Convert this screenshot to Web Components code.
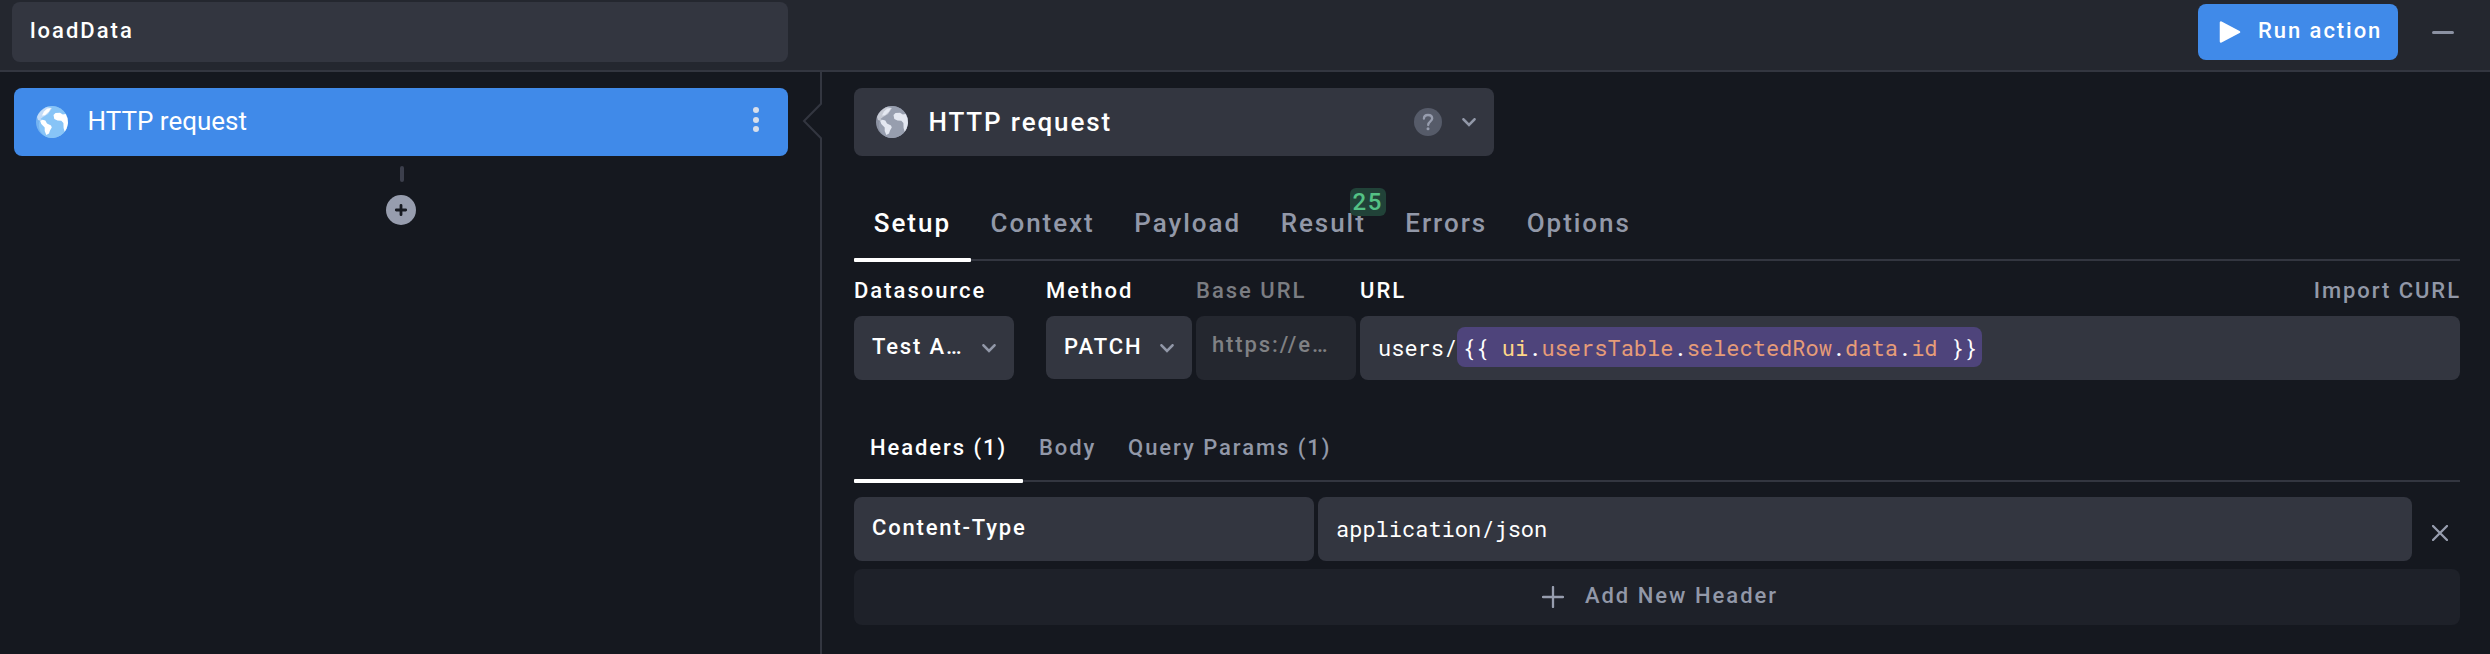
<!DOCTYPE html>
<html lang="en">
<head>
<meta charset="utf-8">
<title>Action editor</title>
<style>
body{margin:0;background:#15181f;overflow:hidden;font-family:Roboto,"Liberation Sans",sans-serif;color:#fff;-webkit-font-smoothing:antialiased}
</style>
</head>
<body>
<action-editor></action-editor>
<script>
function define(name, html) {
  const t = document.createElement('template');
  t.innerHTML = html;
  customElements.define(name, class extends HTMLElement {
    constructor() {
      super();
      this.attachShadow({ mode: 'open' }).appendChild(t.content.cloneNode(true));
    }
  });
}

define('globe-icon', `<style>
:host{display:block;width:32px;height:32px;flex:none}
svg{display:block}
.sea{fill:var(--sea,#979eae)}.edge{fill:var(--edge,#8b91a1)}.haze{fill:var(--haze,#c6cad4)}.land{fill:var(--land,#e4e8f1)}
</style>
<svg width="32" height="32" viewBox="0 0 32 32">
<circle class="edge" cx="16" cy="16" r="16"/>
<path class="sea" d="M9 1.6A16 16 0 0 1 32 16A16 16 0 0 1 10 30.8Q2 26 3 17Z"/>
<path class="haze" d="M1 11Q3.5 4 11 .9L16 2L12 8L7 11L4.5 13L6.5 14.2L5 15L2 14Z"/>
<path class="land" d="M6 9.5L8 5.5L11 2.8L15 2L13 5.5L9 9.3Z"/>
<path class="land" d="M4.2 15L6.5 13.8L9.3 14.6L11 17.5L15 19.6L15.8 21.5L14 24.5L13 27.6L10.3 29L8.7 25V21.5L5.3 18Z"/>
<path class="land" d="M17.5 9L19.5 7L24 6.8L26.8 8.5L29.6 8L31.4 12L32 17L30.6 22.5L28.7 25.8L27.6 22L27.4 17L25.3 14.8L21.5 14.6L18.3 13Z"/>
</svg>`);

define('chevron-icon', `<style>:host{display:block;width:14px;height:9px;flex:none}svg{display:block}</style>
<svg width="14" height="9" viewBox="0 0 14 9"><path d="M1.5 1.3L7 7L12.5 1.3" fill="none" stroke="#9298a8" stroke-width="2.6" stroke-linecap="round" stroke-linejoin="miter"/></svg>`);

define('text-field', `<style>
:host{display:flex;align-items:center;justify-content:space-between;box-sizing:border-box;height:64px;padding:0 18px;border-radius:8px;background:#333640;font-size:22px;font-weight:500;letter-spacing:2px;white-space:nowrap}
:host([muted]){background:#24272f;color:#808184}
:host([mono]){font-family:"Roboto Mono","Liberation Mono",monospace;font-weight:400;letter-spacing:0;justify-content:flex-start}
</style><slot></slot>`);

define('form-label', `<style>
:host{display:block;box-sizing:border-box;height:55px;padding-top:4px;line-height:51px;font-size:22px;font-weight:500;letter-spacing:2px;white-space:nowrap}
:host([muted]){color:#7b7d82}
</style><slot></slot>`);

define('tab-item', `<style>
:host{display:block;position:relative;box-sizing:border-box;padding:0 var(--tab-pad);color:#9298a8;white-space:nowrap}
:host([active]){color:#fff}
:host([active])::after{content:"";position:absolute;left:0;right:0;bottom:-1px;height:4px;border-radius:1px;background:#fff}
</style><slot></slot>`);

define('tab-bar', `<style>
:host{display:flex;box-sizing:border-box;border-bottom:2px solid #333640;font-weight:500;letter-spacing:1.95px;--tab-pad:19.8px;height:105px;font-size:26px;line-height:36px;padding-top:49px;align-items:stretch}
:host([small]){--tab-pad:15.9px;font-size:22px;height:102px;padding-top:50px;line-height:36px}
::slotted(*){margin-bottom:-2px}
</style><slot></slot>`);

define('count-badge', `<style>
:host{position:absolute;right:0;top:-17px;width:36px;height:28px;box-sizing:border-box;padding-left:3px;border-radius:6px;background:#214238;color:#54c285;font-size:24px;line-height:29px;letter-spacing:1.5px;font-weight:500}
</style><slot></slot>`);

define('title-bar', `<style>
:host{display:flex;box-sizing:border-box;height:72px;border-bottom:2px solid #333640;background:#24272f;align-items:flex-start;padding-left:12px;padding-right:36px}
text-field{width:776px;height:60px;margin-top:2px;padding-bottom:3px}
.run{display:flex;box-sizing:border-box;width:200px;height:56px;margin:4px 34px 0 auto;padding:0 0 0 21px;border-radius:8px;background:#408ae9;font-size:22px;font-weight:500;letter-spacing:1.95px;line-height:53px;white-space:nowrap}
.run svg{margin:16px 17px 0 0}
.min{width:22px;height:3px;margin-top:30.5px;border-radius:2px;background:#8b91a2}
</style>
<text-field>loadData</text-field>
<div class="run"><svg width="22" height="24" viewBox="0 0 22 24"><path d="M2 2.5V21.5L20 12Z" fill="#fff" stroke="#fff" stroke-width="2.5" stroke-linejoin="round"/></svg>Run action</div>
<div class="min"></div>`);

define('step-list', `<style>
:host{display:flex;flex-direction:column;align-items:center;box-sizing:border-box;width:802px;padding:16px 14px 0}
.step{display:flex;align-self:stretch;box-sizing:border-box;height:68px;align-items:center;border-radius:8px;background:#408ae9;padding:0 29px 0 22px;font-size:26px;line-height:66px}
.step span{margin-left:19.6px;flex:1;height:68px}
globe-icon{--sea:#87c4f7;--edge:#74b3f1;--haze:#c3dcf8;--land:#fff}
.dots{display:grid;gap:3.5px;margin-bottom:5px}
.dots i{width:6px;height:6px;border-radius:3px;background:#d8dfeb}
.link{width:4px;height:16px;border-radius:2px;background:#3c3f4c;margin:10px 0 13px 2px}
</style>
<div class="step"><globe-icon></globe-icon><span>HTTP request</span><div class="dots"><i></i><i></i><i></i></div></div>
<div class="link"></div>
<svg width="30" height="30" viewBox="0 0 30 30"><circle cx="15" cy="15" r="15" fill="#979dae"/><path d="M10.3 15H19.7M15 10.3V19.7" stroke="#171a21" stroke-width="2.8" stroke-linecap="round"/></svg>`);

define('panel-divider', `<style>
:host{display:flex;flex-direction:column;width:20px}
i{flex:1;width:2px;margin-left:18px;background:#333640}svg{display:block}
</style>
<svg width="20" height="67" viewBox="802 72 20 67"><path d="M821 72V103.8L804 121L821 138.2V139" fill="none" stroke="#333640" stroke-width="2"/></svg><i></i>`);

define('request-panel', `<style>
:host{display:block;flex:1;padding:16px 30px 0 32px}
.kind{display:flex;box-sizing:border-box;width:640px;height:68px;align-items:center;padding:0 18.5px 0 22px;border-radius:8px;background:#333640;font-size:26px;font-weight:500;letter-spacing:1.87px;line-height:68px}
.kind b{font-weight:500;margin-left:20.5px;flex:1}
.kind svg{margin-right:19.5px}
.fields{display:flex}
.ds{width:160px;margin-right:32px}
.me{width:146px;margin-right:4px}
.ba{width:160px;margin-right:4px}
.ur{flex:1}
.lab{display:flex;justify-content:space-between}
.import{color:#9298a8;letter-spacing:1.95px;margin-right:-1px}
.ds text-field,.me text-field{padding-bottom:3px}
.ds text-field{letter-spacing:1.85px}
.me text-field{height:63px}
chevron-icon{margin-top:4px}
.kind chevron-icon{margin-top:1px}
.ba text-field{padding:0 0 7px 16px;letter-spacing:1.9px}
.users{margin-top:-1px}
.pill{box-sizing:border-box;height:40px;padding:0 5px;border-radius:8px;background:#4e447b;line-height:41px;margin-top:-2px;white-space:pre}
.y{color:#ffd788}.o{color:#e69c78}
.row{display:flex;margin-top:15px;align-items:center}
.row text-field{flex:none}
.key{width:460px;margin-right:4px;padding-bottom:3px;letter-spacing:1.82px}
.val{width:1094px;margin-right:20px;padding-bottom:1px}
.add{display:flex;height:56px;margin-top:8px;border-radius:8px;background:#1e2129;color:#9298a8;justify-content:center;font-size:22px;font-weight:500;letter-spacing:2px;line-height:53px}
.add svg{margin:17px 21px 0 6px}
</style>
<div class="kind"><globe-icon></globe-icon><b>HTTP request</b>
<svg width="28" height="28" viewBox="0 0 28 28"><circle cx="14" cy="14" r="14" fill="#565b69"/><path d="M9.9 10.7C9.9 8.2 11.6 7 14 7C16.4 7 18.2 8.4 18.2 10.6C18.2 13.4 14.2 13.4 14.2 17" fill="none" stroke="#979dae" stroke-width="2.3" stroke-linecap="round"/><circle cx="14" cy="20.8" r="1.5" fill="#979dae"/></svg>
<chevron-icon></chevron-icon></div>
<tab-bar><tab-item active>Setup</tab-item><tab-item>Context</tab-item><tab-item>Payload</tab-item><tab-item>Result<count-badge>25</count-badge></tab-item><tab-item>Errors</tab-item><tab-item>Options</tab-item></tab-bar>
<div class="fields">
<div class="ds"><form-label>Datasource</form-label><text-field>Test A…<chevron-icon></chevron-icon></text-field></div>
<div class="me"><form-label>Method</form-label><text-field>PATCH<chevron-icon></chevron-icon></text-field></div>
<div class="ba"><form-label muted>Base URL</form-label><text-field muted>https://e…</text-field></div>
<div class="ur"><div class="lab"><form-label>URL</form-label><form-label class="import">Import CURL</form-label></div><text-field mono><span class="users">users/</span><div class="pill">{{ <span class="y">ui</span>.<span class="o">usersTable</span>.<span class="o">selectedRow</span>.<span class="o">data</span>.<span class="o">id</span> }}</div></text-field></div>
</div>
<tab-bar small><tab-item active>Headers (1)</tab-item><tab-item>Body</tab-item><tab-item>Query Params (1)</tab-item></tab-bar>
<div class="row"><text-field class="key">Content-Type</text-field><text-field class="val" mono><span>application/json</span></text-field>
<svg width="16" height="16" viewBox="0 0 16 16" style="margin-top:8px"><path d="M1 1L15 15M15 1L1 15" stroke="#979dae" stroke-width="2.3" stroke-linecap="round"/></svg></div>
<div class="add"><svg width="22" height="22" viewBox="0 0 22 22"><path d="M1 11H21M11 1V21" stroke="#979dae" stroke-width="2.3" stroke-linecap="round"/></svg>Add New Header</div>`);

define('action-editor', `<style>
:host{display:flex;flex-direction:column;height:654px}
main{display:flex;flex:1}
</style>
<title-bar></title-bar>
<main><step-list></step-list><panel-divider></panel-divider><request-panel></request-panel></main>`);
</script>
</body>
</html>
